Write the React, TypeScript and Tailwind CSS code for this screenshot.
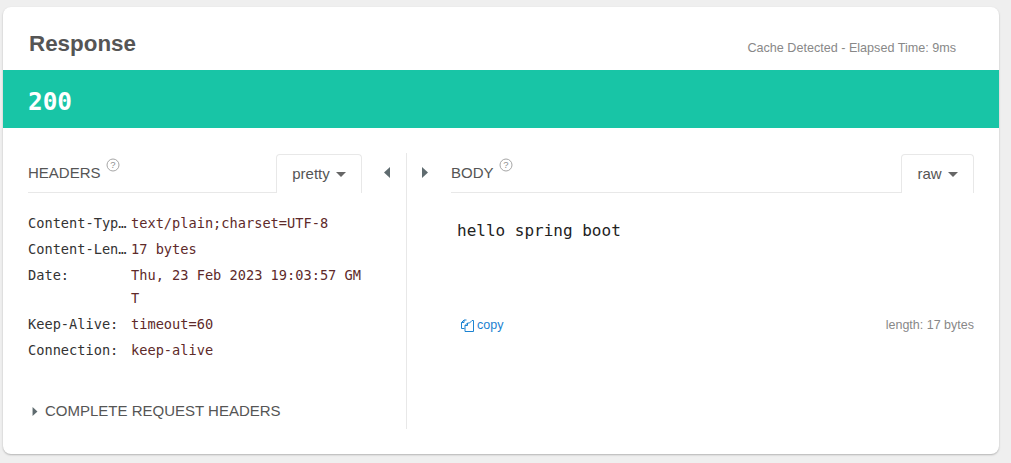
import React from "react";

const sans = "font-['Liberation_Sans',Arial,sans-serif]";
const mono = "font-['DejaVu_Sans_Mono',monospace]";

function Help() {
  return (
    <svg width="14" height="14" viewBox="0 0 14 14" className="ml-[5px] mt-[-17px]">
      <circle cx="7" cy="7" r="6" fill="none" stroke="#a5a5a5" strokeWidth="1" />
      <text x="7" y="10.3" textAnchor="middle" fontSize="9.5" fill="#8e8e8e" fontFamily="Liberation Sans">?</text>
    </svg>
  );
}

function Tri({ dir, className }: { dir: "l" | "r"; className?: string }) {
  return (
    <svg width="6" height="11" viewBox="0 0 6 11" className={className}>
      <path d={dir === "l" ? "M6 0 L0 5.5 L6 11 Z" : "M0 0 L6 5.5 L0 11 Z"} fill="#5f6b6f" />
    </svg>
  );
}

function Select({ label, w }: { label: string; w: string }) {
  return (
    <div className={`${w} h-[39px] border border-b-0 border-[#e8e8e8] rounded-t-[4px] flex items-center justify-center gap-[6px] text-[15px] text-[#555] mb-[-1px] bg-white`}>
      <span>{label}</span>
      <span className="w-0 h-0 mt-[1px] border-l-[5px] border-r-[5px] border-t-[5px] border-l-transparent border-r-transparent border-t-[#666]" />
    </div>
  );
}

const rows: [string, React.ReactNode][] = [
  ["Content-Typ…", "text/plain;charset=UTF-8"],
  ["Content-Len…", "17 bytes"],
  ["Date:", <>Thu, 23 Feb 2023 19:03:57 GM<br />T</>],
  ["Keep-Alive:", "timeout=60"],
  ["Connection:", "keep-alive"],
];

export default function App() {
  return (
    <div className={`${sans} w-[1011px] h-[463px] bg-[#efefef] pt-[7px] pl-[3px] overflow-hidden`}>
      <div className="w-[996px] h-[447px] bg-white rounded-[8px] shadow-[0_1px_2px_rgba(0,0,0,0.25)] overflow-hidden">
        <div className="h-[63px] flex items-start justify-between pl-[26px] pr-[43px]">
          <h2 className="text-[22.4px] leading-[26px] font-bold text-[#555] mt-[24px]">Response</h2>
          <div className="text-[12.6px] leading-[14px] text-[#888] mt-[34px]">Cache Detected - Elapsed Time: 9ms</div>
        </div>
        <div className={`${mono} h-[58px] bg-[#18c5a6] text-white font-bold text-[24.4px] leading-[58px] pl-[25px] pt-[3px]`}>200</div>
        <div className="flex pt-[25px] h-[301px]">
          <div className="w-[404px] h-[276px] border-r border-[#e8e8e8] pl-[25px] pt-[1px] flex flex-col">
            <div className="flex items-center">
              <div className="w-[334px] h-[39px] border-b border-[#e8e8e8] flex items-end justify-between">
                <div className="flex items-center text-[15px] leading-[16px] text-[#555] mb-[11px]">
                  HEADERS
                  <Help />
                </div>
                <Select label="pretty" w="w-[86px]" />
              </div>
              <Tri dir="l" className="ml-[22px] mt-[-2px]" />
            </div>
            <div className={`${mono} mt-[19px] text-[13.65px] leading-[23px] text-[#333] w-[334px]`}>
              {rows.map(([k, v], i) => (
                <div key={i} className="flex mb-[3px]">
                  <div className="w-[103px] shrink-0 whitespace-nowrap">{k}</div>
                  <div className="text-[#5e2a2a]">{v}</div>
                </div>
              ))}
            </div>
            <div className="flex items-center mt-[37px] text-[15px] leading-[18px] text-[#555]">
              <Tri dir="r" className="ml-[4px] mr-[7px] h-[9px]" />
              COMPLETE REQUEST HEADERS
            </div>
          </div>
          <div className="flex-1 pl-[15px] pr-[25px] pt-[1px]">
            <div className="flex items-center">
              <Tri dir="r" className="mr-[23px] mt-[-2px]" />
              <div className="flex-1 h-[39px] border-b border-[#e8e8e8] flex items-end justify-between">
                <div className="flex items-center text-[15px] leading-[16px] text-[#555] mb-[11px]">
                  BODY
                  <Help />
                </div>
                <Select label="raw" w="w-[73px]" />
              </div>
            </div>
            <div className={`${mono} mt-[27px] ml-[35px] text-[16px] leading-[22px] text-[#222]`}>hello spring boot</div>
            <div className="flex items-center justify-between mt-[76px] ml-[39px] text-[12.5px] leading-[14px]">
              <div className="flex items-center gap-[3px] text-[#1b82d1]">
                <svg width="13" height="13" viewBox="0 0 13 13" fill="none" stroke="#1b82d1" strokeWidth="1">
                  <path d="M5.5 1H3L0.5 3.5V9.5H3.5M3 1V3.5H0.5" />
                  <path d="M6.5 4H8.5L11 1.5H12.5V12.5H4V6.5Z" />
                  <path d="M6.5 4V6.5H4" />
                </svg>
                copy
              </div>
              <div className="text-[#888]">length: 17 bytes</div>
            </div>
          </div>
        </div>
      </div>
    </div>
  );
}
